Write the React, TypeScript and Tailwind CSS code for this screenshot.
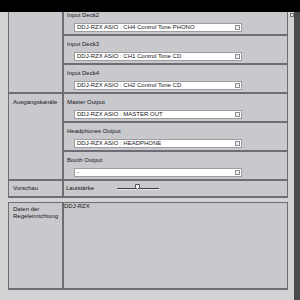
import React from 'react';

function Select({ value }: { value: string }) {
  return (
    <div className="ml-[7px] w-[168px] h-[9px] bg-white border border-[#9c9ca1] flex items-center justify-between pl-[2px] pr-[1px]">
      <span className="leading-[7px] whitespace-nowrap">{value}</span>
      <span className="w-[5px] h-[5px] border border-[#8e8e93] bg-[#f0f0f0]" />
    </div>
  );
}

function Field({ label, value, last }: { label: string; value: string; last?: boolean }) {
  return (
    <div className={last ? 'h-[27px] pt-[5px] pl-[3px]' : 'h-[29px] pt-[5px] pl-[3px] border-b-2 border-[#6d6d73]'}>
      <div className="leading-[7px] h-[7px] mb-[4px]">{label}</div>
      <Select value={value} />
    </div>
  );
}

export default function App() {
  return (
    <div
      className="w-[300px] h-[300px] bg-[#d3d3d6] flex flex-col overflow-hidden text-[6px] text-[#161618]"
      style={{ fontFamily: '"Liberation Sans", Arial, sans-serif' }}
    >
      {/* Titelleiste */}
      <div className="h-[12px] bg-black shrink-0" />

      <div className="flex flex-1 min-h-0">
        <div className="flex-1 overflow-hidden pl-[8px]">
          {/* Tabelle */}
          <div className="-mt-[5px] w-[280px] border-l border-r border-[#6d6d73] bg-[#c9c8cd] border-b-2">
            <div className="grid grid-cols-[55px_1fr] border-b-2 border-[#6d6d73]">
              <div className="border-r-2 border-[#6d6d73]" />
              <div>
                <Field label="Input Deck2" value="DDJ-RZX ASIO : CH4 Control Tone PHONO" />
                <Field label="Input Deck3" value="DDJ-RZX ASIO : CH1 Control Tone CD" />
                <Field label="Input Deck4" value="DDJ-RZX ASIO : CH2 Control Tone CD" last />
              </div>
            </div>

            <div className="grid grid-cols-[55px_1fr] border-b-2 border-[#6d6d73]">
              <div className="border-r-2 border-[#6d6d73] pt-[5px] pl-[4px] leading-[7px]">Ausgangskanäle</div>
              <div>
                <Field label="Master Output" value="DDJ-RZX ASIO : MASTER OUT" />
                <Field label="Headphones Output" value="DDJ-RZX ASIO : HEADPHONE" />
                <Field label="Booth Output" value="-" last />
              </div>
            </div>

            <div className="grid grid-cols-[55px_1fr] h-[15px]">
              <div className="border-r-2 border-[#6d6d73] pl-[4px] flex items-center">Vorschau</div>
              <div className="flex items-center pl-[2px]">
                <span>Lautstärke</span>
                <div className="relative ml-[23px] w-[42px] h-[2px] border-t border-[#3f3f44] border-b border-b-[#e6e6e8]">
                  <svg className="absolute left-[18px] -top-[5px]" width="5" height="6" viewBox="0 0 5 6">
                    <path d="M0.5 0.5 H4.5 V3.5 L2.5 5.5 L0.5 3.5 Z" fill="#f2f2f4" stroke="#55555a" strokeWidth="1" />
                  </svg>
                </div>
              </div>
            </div>
          </div>

          {/* Daten der Regeleinrichtung */}
          <div className="mt-[4px] w-[280px] h-[88px] border border-[#6d6d73] border-b-2 bg-[#c9c8cd] grid grid-cols-[55px_1fr]">
            <div className="border-r-2 border-[#6d6d73] pt-[3px] pl-[4px] leading-[7px]">
              <div>Daten der</div>
              <div>Regeleinrichtung</div>
            </div>
            <div className="leading-[7px]">DDJ-RZX</div>
          </div>
        </div>

        {/* Scrollleiste */}
        <div className="w-[4px] bg-[#d3d3d6] flex flex-col">
          <div className="mt-[1px] w-[4px] h-[4px] bg-[#e8e8ea] border border-[#77777c]" />
        </div>
        <div className="w-[6px] bg-[#4b4b4d]" />
      </div>
    </div>
  );
}
